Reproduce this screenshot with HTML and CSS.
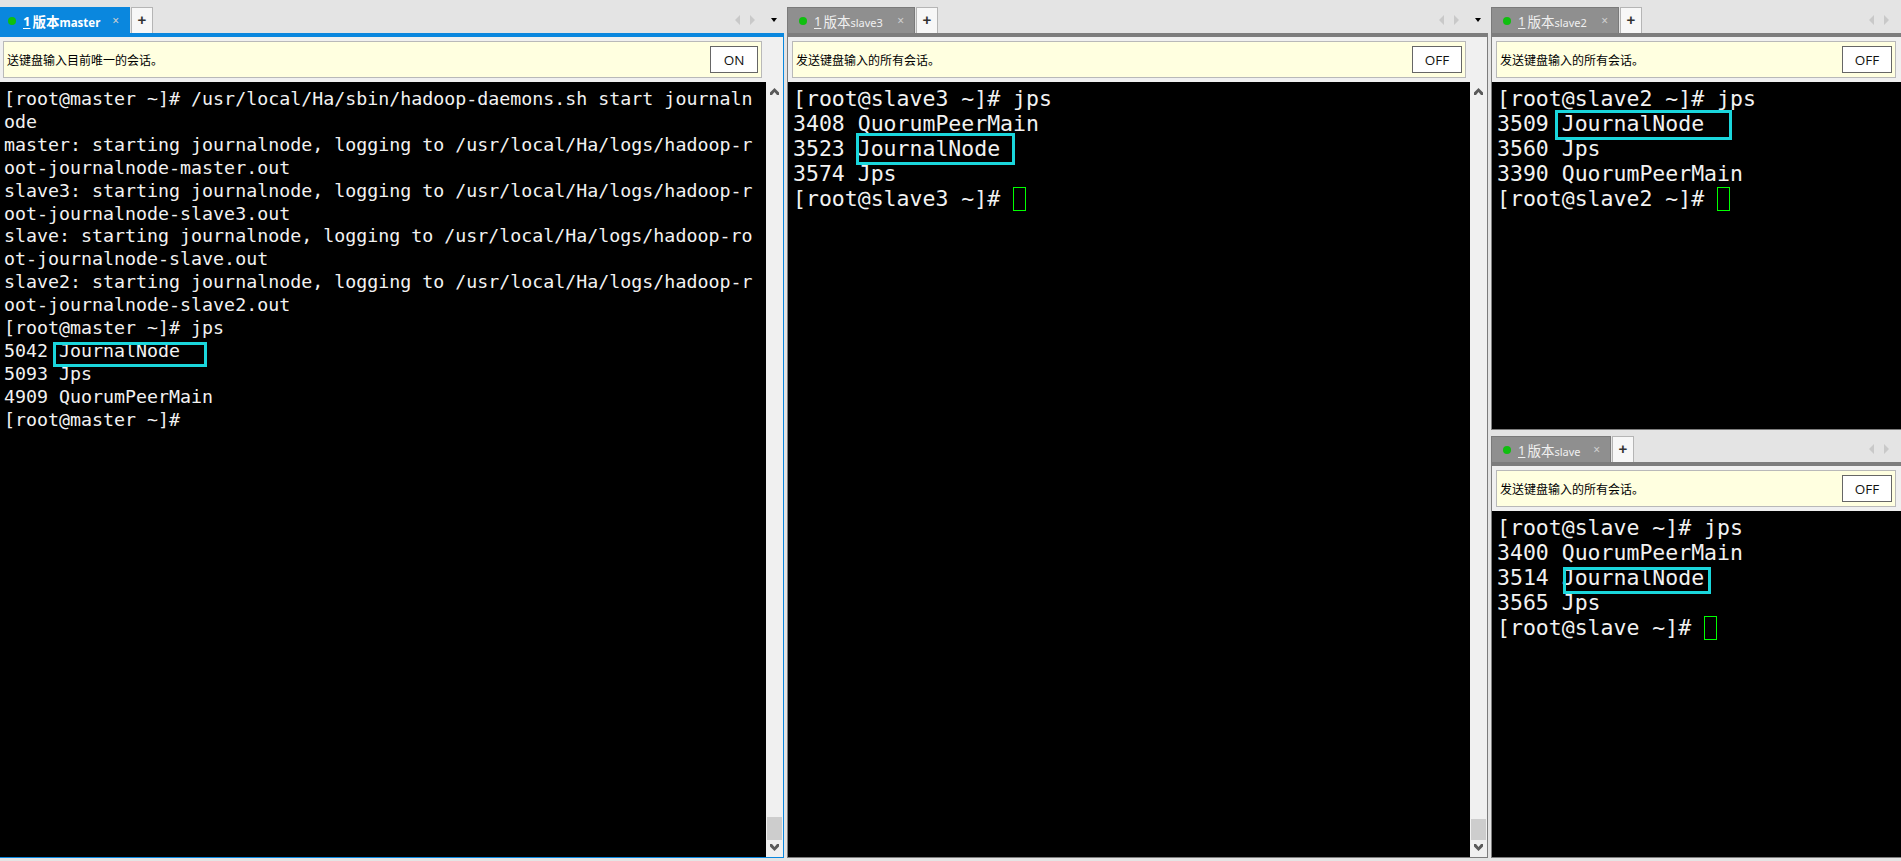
FILE: index.html
```html
<!DOCTYPE html>
<html lang="zh">
<head>
<meta charset="utf-8">
<title>Sessions</title>
<link rel="stylesheet" href="styles.css">
</head>
<body>
<svg class="defs" width="0" height="0" aria-hidden="true">
  <symbol id="chev" viewBox="0 0 9 7"><path d="M4.5 0 L9 4.5 L9 7 L7 7 L4.5 4 L2 7 L0 7 L0 4.5 Z" fill="#5a5a5a"/></symbol>
  <symbol id="nav" viewBox="0 0 22 10"><path d="M6 0 L1 5 L6 10 Z M16 0 L21 5 L16 10 Z" fill="#c9c9c9"/></symbol>
</svg>
<main class="app">
  <section class="col col-master">
    <div class="pane pane-active">
      <div class="tabbar">
        <div class="tab tab-active"><i class="dot"></i><span class="num">1</span><span class="name"><span class="zh">版本</span>master</span><span class="close">×</span></div>
        <div class="plus">+</div>
        <svg class="nav"><use href="#nav"/></svg>
        <i class="drop"></i>
      </div>
      <div class="body">
        <div class="banner banner-master"><span>送键盘输入目前唯一的会话。</span><button class="btn btn-on">ON</button></div>
        <div class="main">
          <div class="term term-small">
<pre>[root@master ~]# /usr/local/Ha/sbin/hadoop-daemons.sh start journaln
ode
master: starting journalnode, logging to /usr/local/Ha/logs/hadoop-r
oot-journalnode-master.out
slave3: starting journalnode, logging to /usr/local/Ha/logs/hadoop-r
oot-journalnode-slave3.out
slave: starting journalnode, logging to /usr/local/Ha/logs/hadoop-ro
ot-journalnode-slave.out
slave2: starting journalnode, logging to /usr/local/Ha/logs/hadoop-r
oot-journalnode-slave2.out
[root@master ~]# jps
5042 JournalNode
5093 Jps
4909 QuorumPeerMain
[root@master ~]#</pre>
            <div class="mark mark-master"></div>
          </div>
          <div class="scroll">
            <svg class="chev"><use href="#chev"/></svg>
            <div class="thumb thumb-master"></div>
            <svg class="chev chev-down"><use href="#chev"/></svg>
          </div>
        </div>
      </div>
    </div>
  </section>

  <section class="col col-slave3">
    <div class="pane">
      <div class="tabbar">
        <div class="tab"><i class="dot"></i><span class="num">1</span><span class="name"><span class="zh">版本</span>slave3</span><span class="close">×</span></div>
        <div class="plus">+</div>
        <svg class="nav"><use href="#nav"/></svg>
        <i class="drop"></i>
      </div>
      <div class="body">
        <div class="banner"><span>发送键盘输入的所有会话。</span><button class="btn">OFF</button></div>
        <div class="main">
          <div class="term">
<pre>[root@slave3 ~]# jps
3408 QuorumPeerMain
3523 JournalNode
3574 Jps
[root@slave3 ~]# <i class="cursor"></i></pre>
            <div class="mark mark-slave3"></div>
          </div>
          <div class="scroll">
            <svg class="chev"><use href="#chev"/></svg>
            <div class="thumb"></div>
            <svg class="chev chev-down"><use href="#chev"/></svg>
          </div>
        </div>
      </div>
    </div>
  </section>

  <section class="col col-right">
    <div class="pane pane-top">
      <div class="tabbar">
        <div class="tab"><i class="dot"></i><span class="num">1</span><span class="name"><span class="zh">版本</span>slave2</span><span class="close">×</span></div>
        <div class="plus">+</div>
        <svg class="nav nav-end"><use href="#nav"/></svg>
      </div>
      <div class="body body-edge">
        <div class="banner"><span>发送键盘输入的所有会话。</span><button class="btn">OFF</button></div>
        <div class="main">
          <div class="term">
<pre>[root@slave2 ~]# jps
3509 JournalNode
3560 Jps
3390 QuorumPeerMain
[root@slave2 ~]# <i class="cursor"></i></pre>
            <div class="mark mark-slave2"></div>
          </div>
        </div>
      </div>
    </div>
    <div class="pane pane-bottom">
      <div class="tabbar tabbar-tight">
        <div class="tab tab-short"><i class="dot"></i><span class="num">1</span><span class="name"><span class="zh">版本</span>slave</span><span class="close">×</span></div>
        <div class="plus">+</div>
        <svg class="nav nav-end"><use href="#nav"/></svg>
      </div>
      <div class="body body-edge">
        <div class="banner"><span>发送键盘输入的所有会话。</span><button class="btn">OFF</button></div>
        <div class="main">
          <div class="term">
<pre>[root@slave ~]# jps
3400 QuorumPeerMain
3514 JournalNode
3565 Jps
[root@slave ~]# <i class="cursor"></i></pre>
            <div class="mark mark-slave"></div>
          </div>
        </div>
      </div>
    </div>
  </section>
</main>
</body>
</html>
```
FILE: styles.css
```css
* { box-sizing: border-box; }
html, body { margin: 0; height: 100%; overflow: hidden; }
body {
  background: #e4e4e4;
  font-family: "Noto Sans CJK SC", "Liberation Sans", sans-serif;
  color: #000;
}
.defs { position: absolute; }

.app {
  display: grid;
  grid-template-columns: 784px 704px 413px;
  height: 861px;
  padding-bottom: 3px;
}
.col { display: flex; flex-direction: column; min-width: 0; min-height: 0; }
.col-slave3 { padding-left: 3px; }
.col-right { padding-left: 3px; gap: 6px; }

.pane { display: flex; flex-direction: column; flex: 1; min-height: 0; }
.pane-top { flex: none; height: 430px; }
.pane-bottom { flex: 1; }

.tabbar {
  display: flex;
  align-items: flex-end;
  height: 33px;
  flex: none;
}
.tabbar-tight { height: 26px; }

.tab {
  display: flex;
  align-items: center;
  width: 128px;
  height: 26px;
  padding-left: 11px;
  background: #8f8f8f;
  border: 1px solid #7a7a7a;
  border-bottom: 0;
  color: #efefef;
  font: 11px "Noto Sans", "Noto Sans CJK SC", sans-serif;
  flex: none;
}
.tab-short { width: 120px; }
.tab-active {
  width: 130px;
  padding-left: 7px;
  background: #0a87de;
  border-color: #0a87de;
  color: #fff;
  font-size: 11.5px;
  font-weight: 700;
}
.dot {
  width: 8px;
  height: 8px;
  border-radius: 50%;
  background: #0fbf0f;
  flex: none;
}
.num {
  margin-left: 7px;
  font-size: 13px;
  text-decoration: underline;
  text-underline-offset: 2px;
}
.name { margin-left: 2px; white-space: nowrap; }
.zh { font-family: "Noto Sans CJK SC", sans-serif; font-size: 13.5px; }
.close {
  margin-left: auto;
  margin-right: 10px;
  font-size: 12px;
  font-weight: 400;
  color: #cfcfcf;
}
.plus {
  width: 22px;
  height: 26px;
  margin-left: 1px;
  flex: none;
  background: #f7f7f7;
  border: 1px solid #b5b5b5;
  border-bottom: 0;
  font: 700 15px/24px "Liberation Sans", sans-serif;
  text-align: center;
  color: #333;
}
.nav {
  width: 22px;
  height: 10px;
  margin: 0 0 8px auto;
  flex: none;
}
.drop {
  width: 0;
  height: 0;
  margin: 0 7px 11px 15px;
  border: 3.5px solid transparent;
  border-top: 4px solid #000;
  border-bottom: 0;
  flex: none;
}
.nav-end { margin-right: 11px; }

.body {
  display: flex;
  flex-direction: column;
  flex: 1;
  min-height: 0;
  background: #f0f0f0;
  border: 1px solid #7d7d7d;
  border-top-width: 4px;
}
.pane-active .body { border-color: #0a87de; border-left: 0; }
.body-edge { border-right: 0; }

.banner {
  display: flex;
  align-items: center;
  justify-content: space-between;
  height: 37px;
  flex: none;
  margin: 4px 5px 4px 4px;
  padding: 0 3px;
  background: #ffffe0;
  border: 1px solid #b9b9b9;
  font-size: 12px;
  white-space: nowrap;
}
.col-slave3 .banner { margin-right: 21px; }
.banner-master { margin: 4px 21px 4px 3px; }
.btn {
  width: 50px;
  height: 27px;
  padding: 0;
  background: #fff;
  border: 1px solid #666;
  border-radius: 0;
  font: 13.5px "Open Sans", "Liberation Sans", sans-serif;
  color: #111;
}
.btn-on { width: 48px; }

.main { display: flex; flex: 1; min-height: 0; }
.term {
  position: relative;
  flex: 1;
  min-width: 0;
  background: #000;
  padding: 4px 0 0 5px;
  overflow: hidden;
}
.term pre {
  margin: 0;
  color: #f2f2f2;
  font: 21.5px/25px "DejaVu Sans Mono", monospace;
}
.term-small { padding: 6px 0 0 4px; }
.term-small pre { font-size: 18.3px; line-height: 22.9px; }
.cursor {
  display: inline-block;
  width: 13px;
  height: 24px;
  border: 1px solid #0f0;
  vertical-align: -5px;
}

.mark { position: absolute; border: 3px solid #1ad6dc; }
.mark-master { left: 53px; top: 260px; width: 154px; height: 25px; }
.mark-slave3 { left: 68px; top: 51px; width: 159px; height: 32px; }
.mark-slave2 { left: 63px; top: 28px; width: 177px; height: 30px; }
.mark-slave { left: 71px; top: 56px; width: 148px; height: 27px; }

.scroll {
  width: 17px;
  flex: none;
  background: #f0f0f0;
  display: flex;
  flex-direction: column;
  align-items: center;
}
.chev { width: 9px; height: 7px; margin-top: 6px; flex: none; }
.chev-down { transform: rotate(180deg); margin-top: 4px; margin-bottom: 6px; }
.thumb { width: 15px; height: 21px; margin-top: auto; background: #cdcdcd; }
.thumb-master { height: 23px; }
```
